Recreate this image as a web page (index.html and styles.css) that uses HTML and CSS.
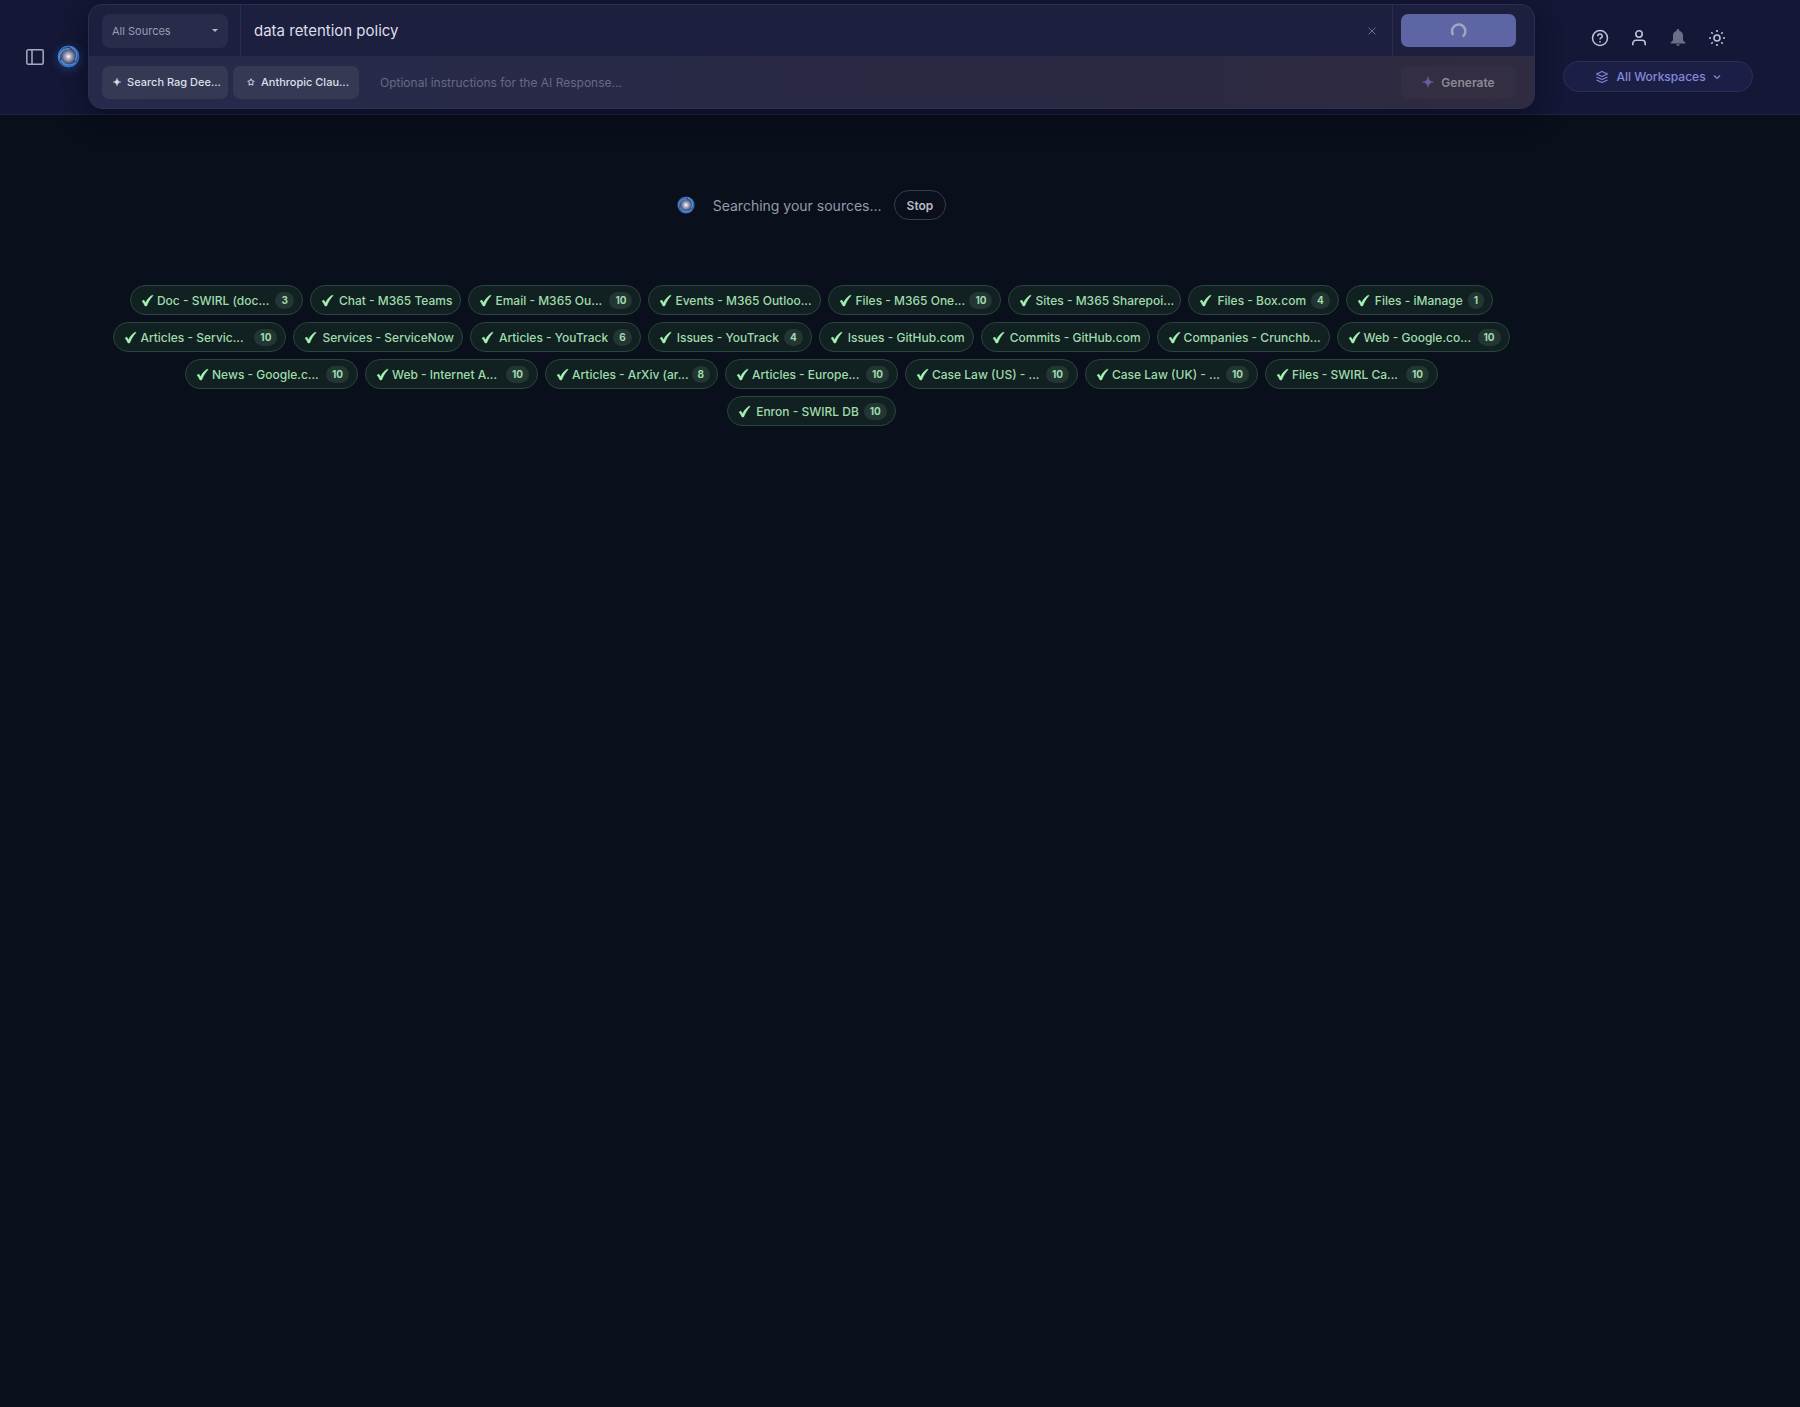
FILE: index.html
```html
<!DOCTYPE html>
<html lang="en">
<head>
    <meta charset="UTF-8">
    <meta name="viewport" content="width=device-width, initial-scale=1.0">
    <title>SWIRL Search</title>
    <link rel="stylesheet" href="styles.css">
</head>
<body>
    <!-- Shared shapes -->
    <svg class="defs" width="0" height="0" aria-hidden="true">
        <defs>
            <radialGradient id="core">
                <stop offset="0" stop-color="#ffffff"/>
                <stop offset="0.25" stop-color="#b4b8cc"/>
                <stop offset="0.65" stop-color="#4d5678"/>
                <stop offset="1" stop-color="#1b2a55"/>
            </radialGradient>
            <symbol id="logo" viewBox="0 0 24 24">
                <circle cx="12" cy="12" r="11" fill="url(#core)"/>
                <circle cx="12" cy="12" r="10.6" fill="none" stroke="#3873c4" stroke-width="1.6"/>
                <path d="M2.500 14C2 8 6.500 3.500 12.500 4M15 2.500C20 5 22.500 10 19.500 16M19 18.500C14 22.500 7.500 21.500 4.500 16" fill="none" stroke="#5290e6" stroke-width="1.600" stroke-linecap="round"/>
            </symbol>
            <symbol id="check" viewBox="0 0 12 12">
                <path d="M1 6.600 2.600 5.600 4.200 8.200C5.800 5 7.800 2.600 10.600 1L11 1.500C8.600 4 6.800 7 5.200 11L3.700 11C3 9.200 2.200 7.900 1 6.600Z" fill="currentColor" stroke="currentColor" stroke-width="0.500"/>
            </symbol>
        </defs>
    </svg>

    <header class="topbar">
        <div class="brand">
            <button class="icon-btn" type="button" aria-label="Toggle sidebar">
                <svg width="20" height="20" viewBox="0 0 20 20" fill="none" stroke="currentColor" stroke-width="1.500"><rect x="1.800" y="2.800" width="16.400" height="14.400" rx="1.500"/><path d="M7 3v14"/></svg>
            </button>
            <a class="logo" href="#" aria-label="SWIRL home"><svg width="23" height="23"><use href="#logo"/></svg></a>
        </div>

        <form class="search">
            <div class="search-row">
                <div class="cell source-cell">
                    <select class="source" aria-label="Sources">
                        <option>All Sources</option>
                    </select>
                </div>
                <div class="query-cell">
                    <input class="query" type="text" value="data retention policy" aria-label="Search">
                    <button class="clear" type="button" aria-label="Clear">
                        <svg width="10" height="10" viewBox="0 0 10 10" stroke="currentColor" stroke-width="1"><path d="M1.500 1.500l7 7M8.500 1.500l-7 7"/></svg>
                    </button>
                </div>
                <div class="cell action-cell">
                    <button class="action go" type="submit" aria-label="Searching">
                        <svg width="18" height="18" viewBox="0 0 18 18" fill="none" stroke="currentColor" stroke-width="2.600"><path d="M3.200 13A6.700 6.700 0 1 1 12.800 14.500"/></svg>
                    </button>
                </div>
            </div>
            <div class="ai-row">
                <button class="model" type="button">
                    <svg width="8" height="8" viewBox="0 0 8 8"><path d="M4 0Q4.300 3.700 8 4 4.300 4.300 4 8 3.700 4.300 0 4 3.700 3.700 4 0Z" fill="currentColor" stroke="currentColor" stroke-width="0.400"/></svg>
                    <span>Search Rag Dee...</span>
                </button>
                <button class="model" type="button">
                    <svg width="8" height="8" viewBox="0 0 10 10" fill="none" stroke="currentColor" stroke-width="1.200"><path d="M5 1l1.200 2.600 2.800.4-2 2 .5 3L5 7.600 2.500 9 3 6 1 4l2.800-.4z"/></svg>
                    <span>Anthropic Clau...</span>
                </button>
                <input class="instructions" type="text" placeholder="Optional instructions for the AI Response..." aria-label="AI instructions">
                <button class="action generate" type="button" disabled>
                    <svg width="12" height="12" viewBox="0 0 12 12"><path d="M6 0.500Q6.500 5.500 11.500 6 6.500 6.500 6 11.500 5.500 6.500 0.500 6 5.500 5.500 6 0.500Z" fill="#6a60a0" stroke="#6a60a0" stroke-width="0.500"/></svg>
                    Generate
                </button>
            </div>
        </form>

        <div class="tools">
            <nav class="tool-icons" aria-label="Tools">
                <button class="icon-btn" type="button" aria-label="Help">
                    <svg width="18" height="18" viewBox="0 0 18 18" fill="none" stroke="currentColor" stroke-width="1.500"><circle cx="9" cy="9" r="7.500"/><path d="M6.800 7.200A2.200 2.100 0 1 1 9.900 9C9.200 9.400 9 9.700 9 10.500"/><path d="M9 11.900v1.600"/></svg>
                </button>
                <button class="icon-btn" type="button" aria-label="Account">
                    <svg width="18" height="18" viewBox="0 0 18 18" fill="none" stroke="currentColor" stroke-width="1.600"><circle cx="9" cy="5" r="3.200"/><path d="M2.800 16.300V14.500A3.200 3.200 0 0 1 6 11.300h6a3.200 3.200 0 0 1 3.200 3.200v1.800"/></svg>
                </button>
                <button class="icon-btn muted" type="button" aria-label="Notifications">
                    <svg width="18" height="18" viewBox="0 0 18 18" fill="currentColor"><path d="M9 0c.8 0 1.300.5 1.300 1.300v.5C12.600 2.400 14 4.200 14 6.600v4.600l2.300 2.300v1H1.700v-1L4 11.200V6.600c0-2.400 1.400-4.200 3.700-4.800v-.5C7.700.5 8.200 0 9 0zM7.200 15.200h3.600a1.800 1.800 0 0 1-3.600 0z"/></svg>
                </button>
                <button class="icon-btn" type="button" aria-label="Theme">
                    <svg width="18" height="18" viewBox="0 0 18 18" fill="none" stroke="currentColor" stroke-width="1.600"><circle cx="9" cy="9" r="3"/><path d="M9 1v2M9 15v2M1 9h2M15 9h2M3.300 3.300l1.400 1.400M13.300 13.300l1.400 1.400M3.300 14.700l1.400-1.400M13.300 4.700l1.400-1.400"/></svg>
                </button>
            </nav>
            <button class="workspaces" type="button">
                <svg width="14" height="14" viewBox="0 0 14 14" fill="none" stroke="currentColor" stroke-width="1.100" stroke-linejoin="round"><path d="M7 1.500l5.500 2.500L7 6.500 1.500 4z"/><path d="M1.500 7 7 9.500 12.500 7M1.500 10 7 12.500 12.500 10"/></svg>
                All Workspaces
                <svg width="8" height="8" viewBox="0 0 8 8" fill="none" stroke="currentColor" stroke-width="1.200"><path d="M1 2.500l3 3 3-3"/></svg>
            </button>
        </div>
    </header>

    <main class="content">
        <div class="status">
            <svg class="spinner" width="18" height="18"><use href="#logo"/></svg>
            <span class="status-text" role="status">Searching your sources...</span>
            <button class="stop" type="button">Stop</button>
        </div>

        <ul class="chips">
            <li class="chip full"><svg><use href="#check"/></svg><span>Doc - SWIRL (doc...</span><b>3</b></li>
            <li class="chip"><svg><use href="#check"/></svg><span>Chat - M365 Teams</span></li>
            <li class="chip full"><svg><use href="#check"/></svg><span>Email - M365 Ou...</span><b>10</b></li>
            <li class="chip full"><svg><use href="#check"/></svg><span>Events - M365 Outloo...</span></li>
            <li class="chip full"><svg><use href="#check"/></svg><span>Files - M365 One...</span><b>10</b></li>
            <li class="chip full"><svg><use href="#check"/></svg><span>Sites - M365 Sharepoi...</span></li>
            <li class="chip"><svg><use href="#check"/></svg><span>Files - Box.com</span><b>4</b></li>
            <li class="chip"><svg><use href="#check"/></svg><span>Files - iManage</span><b>1</b></li>
            <li class="chip full"><svg><use href="#check"/></svg><span>Articles - Servic...</span><b>10</b></li>
            <li class="chip"><svg><use href="#check"/></svg><span>Services - ServiceNow</span></li>
            <li class="chip"><svg><use href="#check"/></svg><span>Articles - YouTrack</span><b>6</b></li>
            <li class="chip"><svg><use href="#check"/></svg><span>Issues - YouTrack</span><b>4</b></li>
            <li class="chip"><svg><use href="#check"/></svg><span>Issues - GitHub.com</span></li>
            <li class="chip"><svg><use href="#check"/></svg><span>Commits - GitHub.com</span></li>
            <li class="chip full"><svg><use href="#check"/></svg><span>Companies - Crunchb...</span></li>
            <li class="chip full"><svg><use href="#check"/></svg><span>Web - Google.co...</span><b>10</b></li>
            <li class="chip full"><svg><use href="#check"/></svg><span>News - Google.c...</span><b>10</b></li>
            <li class="chip full"><svg><use href="#check"/></svg><span>Web - Internet A...</span><b>10</b></li>
            <li class="chip full"><svg><use href="#check"/></svg><span>Articles - ArXiv (ar...</span><b>8</b></li>
            <li class="chip full"><svg><use href="#check"/></svg><span>Articles - Europe...</span><b>10</b></li>
            <li class="chip full"><svg><use href="#check"/></svg><span>Case Law (US) - ...</span><b>10</b></li>
            <li class="chip full"><svg><use href="#check"/></svg><span>Case Law (UK) - ...</span><b>10</b></li>
            <li class="chip full"><svg><use href="#check"/></svg><span>Files - SWIRL Ca...</span><b>10</b></li>
            <li class="chip"><svg><use href="#check"/></svg><span>Enron - SWIRL DB</span><b>10</b></li>
        </ul>
    </main>
</body>
</html>
```
FILE: styles.css
```css
* {
    box-sizing: border-box;
}

body {
    margin: 0;
    min-height: 100vh;
    background: #090f1b;
    color: #d9dbe8;
    font-family: Inter, "Liberation Sans", sans-serif;
    font-size: 12px;
}

button, input, select {
    font: inherit;
    color: inherit;
    border: 0;
    background: none;
    padding: 0;
    margin: 0;
    outline: 0;
}

button {
    display: flex;
    align-items: center;
    justify-content: center;
}

svg {
    display: block;
    flex: none;
}

.defs {
    position: absolute;
}

.topbar, .content {
    display: grid;
    grid-template-columns: 88px 1fr 265px;
}

/* Header */
.topbar {
    background: #141735;
    border-bottom: 1px solid #21243f;
    padding: 4px 0 5px;
}

.brand {
    display: flex;
    align-items: center;
    gap: 12px;
    padding-left: 25px;
}

.icon-btn {
    color: #c0c2da;
}

.brand .icon-btn {
    color: #a9abc4;
}

.icon-btn.muted {
    color: #6b6e88;
}

.logo svg {
    border-radius: 50%;
    box-shadow: 0 2px 10px rgba(29, 79, 148, 0.6);
}

.search {
    border: 1px solid #2d3050;
    border-radius: 14px;
    background: #1c1f3e;
    box-shadow: 0 8px 24px rgba(4, 6, 18, 0.5);
    overflow: hidden;
}

.search-row {
    display: flex;
    height: 51px;
}

.cell {
    display: flex;
    align-items: center;
}

.source-cell {
    width: 152px;
    padding: 0 12px 0 13px;
    border-right: 1px solid #292c4c;
}

.source {
    appearance: none;
    width: 100%;
    height: 34px;
    padding: 0 10px;
    border-radius: 8px;
    color: #9b9db3;
    font-size: 11px;
    background: #282b49 url("data:image/svg+xml,%3Csvg xmlns='http://www.w3.org/2000/svg' width='6' height='3'%3E%3Cpath d='M0 0h6L3 3z' fill='%23b5b7c9'/%3E%3C/svg%3E") no-repeat right 10px center;
}

.query-cell {
    display: flex;
    flex: 1;
    align-items: center;
    padding: 0 14px 0 13px;
}

.query {
    flex: 1;
    font-size: 15px;
    color: #dcdeeb;
}

.clear {
    width: 12px;
    color: #6d7089;
}

.action-cell {
    width: 142px;
    padding: 0 18px 0 8px;
    border-left: 1px solid #292c4c;
}

.action {
    width: 115px;
    height: 33px;
    gap: 7px;
    border-radius: 7px;
}

.go {
    background: #5d65a4;
    color: #a3a5bd;
}

.ai-row {
    display: flex;
    align-items: center;
    height: 52px;
    gap: 5px;
    padding: 0 18px 0 13px;
    background: linear-gradient(90deg, #262a4b, #2a2943 65%, #2f2b40);
}

.model {
    width: 126px;
    height: 33px;
    gap: 6px;
    padding-left: 4px;
    border-radius: 7px;
    background: #353954;
    color: #dddfeb;
    font-size: 11px;
    font-weight: 500;
}

.instructions {
    flex: 1;
    padding-left: 16px;
    color: #9193a9;
}

.instructions::placeholder {
    color: #676a83;
}

.generate {
    background: #332e42;
    color: #8b8996;
    font-weight: 600;
}

.tools {
    display: flex;
    flex-direction: column;
    align-items: center;
    gap: 14px;
    padding: 25px 47px 0 28px;
}

.tool-icons {
    display: flex;
    gap: 21px;
}

.workspaces {
    width: 100%;
    height: 31px;
    gap: 7px;
    border: 1px solid #2b2e58;
    border-radius: 16px;
    background: #1c1f45;
    color: #8389dc;
    font-weight: 500;
}

/* Search progress */
.status, .chips {
    grid-column: 2;
}

.status {
    display: flex;
    align-items: center;
    justify-content: center;
    padding: 75px 0 65px;
}

.spinner {
    margin-right: 18px;
}

.status-text {
    margin-right: 12px;
    color: #969aac;
    font-size: 14px;
}

.stop {
    height: 30px;
    padding: 0 12px;
    border: 1px solid #383b4d;
    border-radius: 15px;
    color: #b9bbc8;
    font-weight: 600;
}

.chips {
    display: flex;
    flex-wrap: wrap;
    justify-content: center;
    gap: 7px;
    margin: 0;
    padding: 0 16px;
    list-style: none;
}

.chip {
    display: flex;
    align-items: center;
    height: 30px;
    gap: 5px;
    padding: 0 8px 0 10px;
    border: 1px solid #2b443f;
    border-radius: 15px;
    background: #112020;
    color: #9fdcac;
    font-weight: 500;
    white-space: nowrap;
}

.chip.full {
    width: 173px;
    gap: 3px;
}

.chip svg {
    width: 13px;
    height: 13px;
    color: #a5f3b4;
}

.chip b {
    margin-left: auto;
    padding: 0 6px;
    border-radius: 9px;
    background: #243633;
    font-size: 10px;
    font-weight: 700;
    line-height: 17px;
}
```
